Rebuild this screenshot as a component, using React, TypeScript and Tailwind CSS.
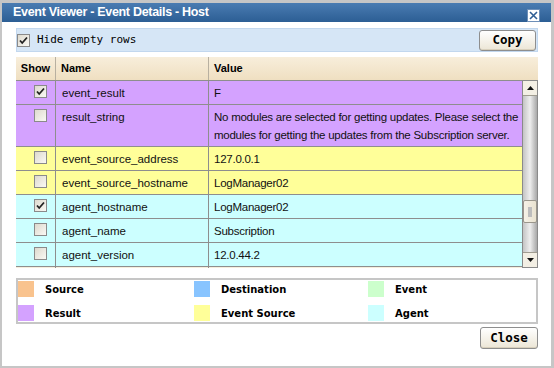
import React from 'react'

type Row = { name: string; value: string; color: string; checked: boolean; tall?: boolean }

const rows: Row[] = [
  { name: 'event_result', value: 'F', color: 'bg-[#d4a2ff]', checked: true },
  {
    name: 'result_string',
    value:
      'No modules are selected for getting updates. Please select the modules for getting the updates from the Subscription server.',
    color: 'bg-[#d4a2ff]',
    checked: false,
    tall: true,
  },
  { name: 'event_source_address', value: '127.0.0.1', color: 'bg-[#ffff99]', checked: false },
  { name: 'event_source_hostname', value: 'LogManager02', color: 'bg-[#ffff99]', checked: false },
  { name: 'agent_hostname', value: 'LogManager02', color: 'bg-[#ccffff]', checked: true },
  { name: 'agent_name', value: 'Subscription', color: 'bg-[#ccffff]', checked: false },
  { name: 'agent_version', value: '12.0.44.2', color: 'bg-[#ccffff]', checked: false },
  { name: '', value: '', color: 'bg-[#f6eedc]', checked: false },
]

const legend = [
  { label: 'Source', color: 'bg-[#f9c38e]' },
  { label: 'Destination', color: 'bg-[#88c4ff]' },
  { label: 'Event', color: 'bg-[#ccffcc]' },
  { label: 'Result', color: 'bg-[#d4a2ff]' },
  { label: 'Event Source', color: 'bg-[#ffff99]' },
  { label: 'Agent', color: 'bg-[#ccffff]' },
]

function Box({ checked }: { checked: boolean }) {
  return (
    <svg width="13" height="13" viewBox="0 0 13 13">
      <defs>
        <linearGradient id="cb" x1="0" y1="0" x2="1" y2="1">
          <stop offset="0" stopColor="#dcd8cc" />
          <stop offset="1" stopColor="#fbfaf6" />
        </linearGradient>
      </defs>
      <rect x="0.5" y="0.5" width="12" height="12" fill="url(#cb)" stroke="#8a8a8a" />
      {checked && <path d="M3 6.5 L5.2 9 L10 3.5" fill="none" stroke="#222" strokeWidth="1.8" />}
    </svg>
  )
}

function Btn({ label, tall }: { label: string; tall?: boolean }) {
  return (
    <div
      className={`${tall ? 'h-[22px] w-[58px]' : 'h-[21px] w-[57px]'} flex items-center justify-center rounded-[3px] border border-[#8e8e8e] bg-gradient-to-b from-white to-[#ece6d6] font-['DejaVu_Sans_Mono'] font-bold text-[12.5px] text-black shadow-[inset_0_-1px_0_#d8d0bc]`}
    >
      {label}
    </div>
  )
}

export default function App() {
  return (
    <div className="w-[554px] h-[368px] bg-white border-t-[3px] border-l-2 border-r-[3px] border-b-2 border-[#c6c6c6] flex flex-col font-['Liberation_Sans'] overflow-hidden">
      <div className="h-[19px] shrink-0 bg-gradient-to-b from-[#4a7cb2] to-[#2c5e94] flex items-center justify-between pl-[11px] pr-[11px]">
        <span className="text-white font-bold text-[12.5px] tracking-[-0.3px]">Event Viewer - Event Details - Host</span>
        <div className="w-[13px] h-[13px] bg-white border border-[#6d8fb8] flex items-center justify-center mt-[5px]">
          <svg width="9" height="9" viewBox="0 0 9 9">
            <path d="M1 1 L8 8 M8 1 L1 8" stroke="#2f5e94" strokeWidth="1.6" />
          </svg>
        </div>
      </div>

      <div className="ml-[14px] mr-[13px] mt-[6px] h-[24px] bg-[#d6e6f6] border border-[#c2d7ee] flex items-center justify-between pr-px">
        <div className="flex items-center gap-[7px]">
          <Box checked />
          <span className="font-['DejaVu_Sans_Mono'] text-[11px] text-black">Hide empty rows</span>
        </div>
        <Btn label="Copy" />
      </div>

      <div className="ml-[14px] mr-[13px] mt-[5px] h-[211px] flex overflow-hidden">
        <div className="flex-1 flex flex-col overflow-hidden">
          <div className="h-[23px] shrink-0 flex bg-gradient-to-b from-[#f8eedb] to-[#efdfc1] font-bold text-[11px] text-black">
            <div className="w-[40px] flex items-center justify-center border-r border-[#b8b0a0]">Show</div>
            <div className="w-[153px] flex items-center pl-[5px] border-r border-[#b8b0a0]">Name</div>
            <div className="flex-1 flex items-center pl-[5px]">Value</div>
          </div>
          {rows.map((r, i) => (
            <div
              key={i}
              className={`${r.color} ${r.tall ? 'h-[42px]' : 'h-[24px]'} shrink-0 flex border-t border-[#8e8e8e] text-[11.5px] text-[#111]`}
            >
              <div className="w-[40px] flex justify-end pr-[8px] pt-[4px] border-r border-[#8e8e8e]">
                <Box checked={r.checked} />
              </div>
              <div className="w-[153px] pl-[6px] pt-[4px] border-r border-[#8e8e8e]">{r.name}</div>
              <div className="flex-1 pl-[5px] pt-[3px] leading-[18px] tracking-[-0.25px] whitespace-nowrap">
                {r.tall ? (
                  <>
                    No modules are selected for getting updates. Please select the
                    <br />
                    modules for getting the updates from the Subscription server.
                  </>
                ) : (
                  r.value
                )}
              </div>
            </div>
          ))}
        </div>

        <div className="w-[16px] flex flex-col">
          <div className="h-[23px] bg-gradient-to-b from-[#f8eedb] to-[#efdfc1]" />
          <div className="flex-1 flex flex-col border border-[#8a8a8a] bg-gradient-to-r from-[#c4c4c4] via-[#eeeeee] to-[#a8a8a8]">
            <div className="h-[15px] bg-[#f3efe4] border-b border-[#a09c90] flex items-center justify-center">
              <svg width="7" height="4" viewBox="0 0 7 4">
                <path d="M0 4 L3.5 0 L7 4 Z" fill="#111" />
              </svg>
            </div>
            <div className="h-[104px]" />
            <div className="h-[23px] bg-gradient-to-r from-[#f6f2e8] to-[#e9e2d0] border border-[#9a968c] rounded-[2px] flex items-center justify-center">
              <div className="w-[4px] h-[10px] bg-[#bdbdbd]" />
            </div>
            <div className="flex-1" />
            <div className="h-[15px] bg-[#f3efe4] border-t border-[#a09c90] flex items-center justify-center">
              <svg width="7" height="4" viewBox="0 0 7 4">
                <path d="M0 0 L3.5 4 L7 0 Z" fill="#111" />
              </svg>
            </div>
          </div>
        </div>
      </div>

      <div className="ml-[14px] mr-[13px] mt-[10px] h-[46px] border-2 border-[#c6c6c6] grid grid-cols-[176px_174px_1fr] content-center gap-y-[8px] font-['DejaVu_Sans'] font-bold text-[10px] text-black">
        {legend.map((l) => (
          <div key={l.label} className="flex items-center gap-[11px]">
            <div className={`${l.color} w-[16px] h-[16px]`} />
            <span>{l.label}</span>
          </div>
        ))}
      </div>

      <div className="mr-[13px] mt-[3px] flex justify-end">
        <Btn label="Close" tall />
      </div>
    </div>
  )
}
